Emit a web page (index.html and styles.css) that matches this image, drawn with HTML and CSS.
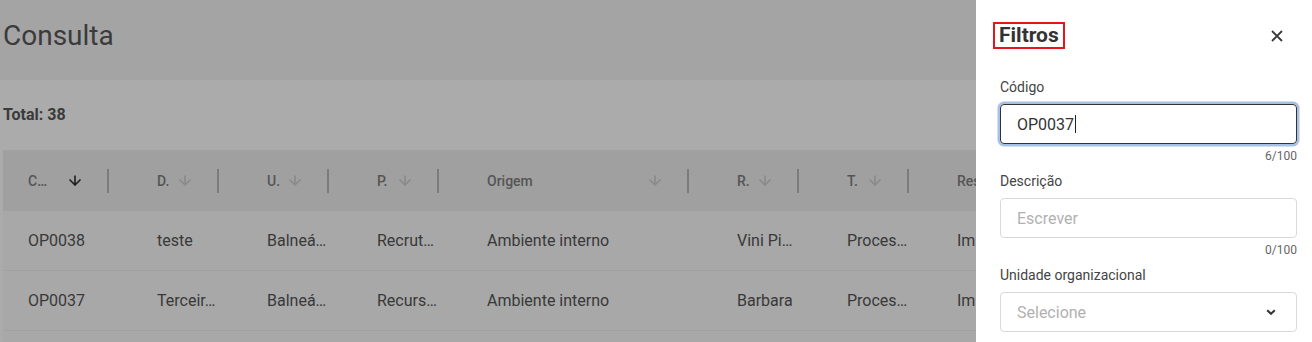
FILE: index.html
```html
<!DOCTYPE html>
<html lang="pt-BR">
<head>
<meta charset="utf-8">
<title>Consulta</title>
<link rel="stylesheet" href="styles.css">
</head>
<body>
<div class="page">
  <header class="page-header">
    <h1 class="page-title">Consulta</h1>
  </header>
  <main class="content">
    <div class="total">Total: 38</div>
    <div class="table">
      <div class="grid-row thead">
        <div class="th"><span class="th-label">C…</span><svg class="sort active" viewBox="0 0 14 11" width="14" height="11"><path d="M7 0.5V10M1.5 4.5L7 10L12.5 4.5"/></svg><span class="divider"></span></div>
        <div class="th"><span class="th-label">D.</span><svg class="sort" viewBox="0 0 14 11" width="14" height="11"><path d="M7 0.5V10M1.5 4.5L7 10L12.5 4.5"/></svg><span class="divider"></span></div>
        <div class="th"><span class="th-label">U.</span><svg class="sort" viewBox="0 0 14 11" width="14" height="11"><path d="M7 0.5V10M1.5 4.5L7 10L12.5 4.5"/></svg><span class="divider"></span></div>
        <div class="th"><span class="th-label">P.</span><svg class="sort" viewBox="0 0 14 11" width="14" height="11"><path d="M7 0.5V10M1.5 4.5L7 10L12.5 4.5"/></svg><span class="divider"></span></div>
        <div class="th"><span class="th-label">Origem</span><svg class="sort" viewBox="0 0 14 11" width="14" height="11"><path d="M7 0.5V10M1.5 4.5L7 10L12.5 4.5"/></svg><span class="divider"></span></div>
        <div class="th"><span class="th-label">R.</span><svg class="sort" viewBox="0 0 14 11" width="14" height="11"><path d="M7 0.5V10M1.5 4.5L7 10L12.5 4.5"/></svg><span class="divider"></span></div>
        <div class="th"><span class="th-label">T.</span><svg class="sort" viewBox="0 0 14 11" width="14" height="11"><path d="M7 0.5V10M1.5 4.5L7 10L12.5 4.5"/></svg><span class="divider"></span></div>
        <div class="th last"><span class="th-label">Res</span></div>
      </div>
      <div class="grid-row tr">
        <div class="td">OP0038</div>
        <div class="td">teste</div>
        <div class="td">Balneá…</div>
        <div class="td">Recrut…</div>
        <div class="td">Ambiente interno</div>
        <div class="td">Vini Pi…</div>
        <div class="td">Proces…</div>
        <div class="td last">Im</div>
      </div>
      <div class="grid-row tr">
        <div class="td">OP0037</div>
        <div class="td">Terceir…</div>
        <div class="td">Balneá…</div>
        <div class="td">Recurs…</div>
        <div class="td">Ambiente interno</div>
        <div class="td">Barbara</div>
        <div class="td">Proces…</div>
        <div class="td last">Im</div>
      </div>
      <div class="grid-row tr"></div>
    </div>
  </main>
</div>

<aside class="drawer">
  <div class="drawer-header">
    <h2 class="drawer-title">Filtros</h2>
    <button class="close-btn" type="button" aria-label="Fechar">
      <svg viewBox="0 0 12 12" width="12" height="12"><path d="M1 1L11 11M11 1L1 11"/></svg>
    </button>
  </div>
  <form class="filters">
    <div class="field">
      <label class="field-label">Código</label>
      <div class="field-input focused"><span class="value">OP0037</span><span class="caret"></span></div>
      <div class="counter">6/100</div>
    </div>
    <div class="field">
      <label class="field-label">Descrição</label>
      <div class="field-input"><span class="placeholder">Escrever</span></div>
      <div class="counter">0/100</div>
    </div>
    <div class="field">
      <label class="field-label">Unidade organizacional</label>
      <div class="field-input select"><span class="placeholder">Selecione</span>
        <svg class="chevron" viewBox="0 0 10 6" width="10" height="6"><path d="M1.2 1.2L5 4.8L8.8 1.2"/></svg>
      </div>
    </div>
  </form>
</aside>
</body>
</html>
```

FILE: styles.css
```css
* { box-sizing: border-box; }

html, body {
  margin: 0;
  padding: 0;
  height: 100%;
}

body {
  font-family: Roboto, "Liberation Sans", Arial, sans-serif;
  background: #ababab;
  overflow: hidden;
  color: #3c3c3c;
}

.page {
  width: 976px;
  height: 100%;
  overflow: hidden;
}

.page-header {
  height: 80px;
  background: #a4a4a4;
  padding: 18px 0 0 3px;
}

.page-title {
  margin: 0;
  font-size: 28px;
  line-height: 36px;
  font-weight: 400;
  color: #3b3b3b;
}

.content {
  padding: 25px 0 0 3px;
}

.total {
  font-size: 16px;
  line-height: 20px;
  font-weight: 700;
  color: #3a3a3a;
  margin-bottom: 25px;
}

.grid-row {
  display: grid;
  grid-template-columns: 129px 110px 110px 110px 250px 110px 110px 1fr;
}

.thead {
  height: 61px;
  background: #a0a0a0;
  align-items: center;
}

.th {
  display: flex;
  align-items: center;
  padding: 0 23px 0 25px;
  min-width: 0;
}

.th.last {
  padding-right: 0;
}

.th-label {
  flex: 1;
  min-width: 0;
  font-size: 14px;
  font-weight: 500;
  color: #555555;
  white-space: nowrap;
  overflow: hidden;
}

.sort {
  flex: none;
  margin-right: 25px;
  fill: none;
  stroke: #8a8a8a;
  stroke-width: 1.6;
}

.sort.active {
  stroke: #1e1e1e;
}

.divider {
  flex: none;
  width: 2px;
  height: 24px;
  background: #7c7c7c;
}

.tr {
  height: 60px;
  background: #a8a8a8;
  border-bottom: 1px solid #a1a1a1;
  align-items: center;
}

.td {
  padding: 0 23px 0 25px;
  font-size: 16px;
  color: #383838;
  white-space: nowrap;
  overflow: hidden;
}

.td.last {
  padding-right: 0;
}

/* Drawer */
.drawer {
  position: fixed;
  top: 0;
  right: 0;
  width: 336px;
  height: 100%;
  background: #ffffff;
  padding: 22px 15px 0 24px;
}

.drawer-header {
  display: flex;
  align-items: center;
  justify-content: space-between;
}

.drawer-title {
  margin: 0 0 0 -7px;
  font-size: 21px;
  line-height: 23px;
  font-weight: 700;
  color: #333333;
  border: 2px solid #e8141c;
  padding: 0 4px 0 4px;
}

.close-btn {
  width: 24px;
  height: 24px;
  margin-right: 8px;
  padding: 0;
  border: 0;
  background: transparent;
  display: flex;
  align-items: center;
  justify-content: center;
}

.close-btn svg {
  fill: none;
  stroke: #3c3c3c;
  stroke-width: 1.8;
}

.filters {
  margin-top: 28px;
}

.field {
  margin-bottom: 7px;
}

.field-label {
  display: block;
  font-size: 14px;
  line-height: 20px;
  color: #444444;
  margin-bottom: 7px;
}

.field-input {
  height: 40px;
  border: 1px solid #d9d9d9;
  border-radius: 4px;
  padding: 0 20px 0 16px;
  display: flex;
  align-items: center;
  font-size: 16px;
  color: #333333;
}

.field-input.focused {
  border-color: #333333;
  box-shadow: 0 0 0 2.5px #a7c0e6;
}

.caret {
  display: inline-block;
  width: 1px;
  height: 18px;
  background: #222;
  margin-left: 1px;
}

.placeholder {
  color: #b1b1b1;
  flex: 1;
}

.chevron {
  flex: none;
  fill: none;
  stroke: #333;
  stroke-width: 2;
}

.counter {
  margin-top: 4px;
  text-align: right;
  font-size: 12px;
  line-height: 16px;
  color: #666666;
}
```
